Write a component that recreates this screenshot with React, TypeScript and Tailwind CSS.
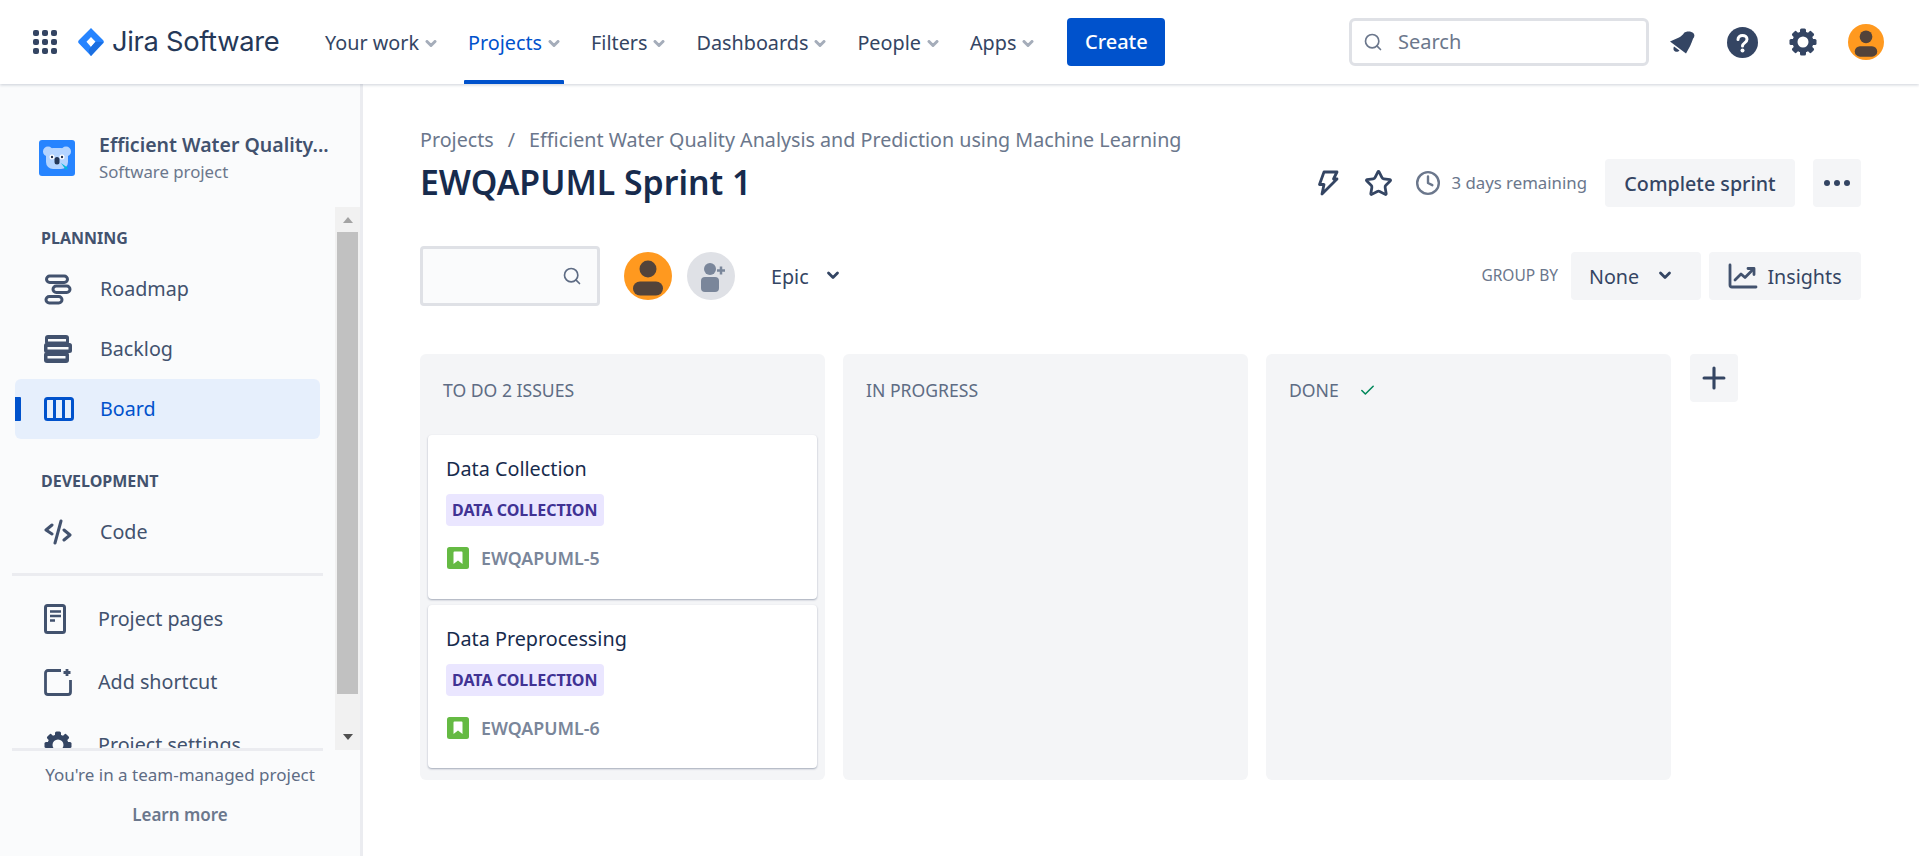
import React from 'react';
import { Plus, Check, Search, Star, Clock } from 'lucide-react';

const NavChevron: React.FC = () => (
  <svg width="12" height="8" viewBox="0 0 12 8" className="ml-[6px] mt-[1px]">
    <path d="M2 1.500l4 4 4-4" fill="none" stroke="#A5ADBA" strokeWidth="3" strokeLinecap="round" strokeLinejoin="round" />
  </svg>
);

const SmallChevron: React.FC = () => (
  <svg width="14" height="10" viewBox="0 0 14 10">
    <path d="M2.500 2l4.500 4.500L11.500 2" fill="none" stroke="#344563" strokeWidth="2.800" strokeLinecap="round" strokeLinejoin="round" />
  </svg>
);

const GridIcon: React.FC = () => (
  <svg width="24" height="24" viewBox="0 0 24 24" fill="#344563">
    {[0, 9, 18].map((y) =>
      [0, 9, 18].map((x) => <rect key={`${x}-${y}`} x={x} y={y} width="6" height="6" rx="2" />)
    )}
  </svg>
);

const JiraLogo: React.FC = () => (
  <svg width="26" height="28" viewBox="0 0 26 28">
    <path d="M13 0L25 12a2.500 2.500 0 010 3.500L13 28 1 15.500a2.500 2.500 0 010-3.500z" fill="#2684FF" />
    <path d="M13 9l4.500 4.800L13 19l-4.500-5.200z" fill="#fff" />
    <path d="M13 19l4.500-5.200L25.500 14 13 28c-3-4-3-6 0-9z" fill="#1C6FE0" />
  </svg>
);

const UserAvatar: React.FC<{ size: number }> = ({ size }) => (
  <svg width={size} height={size} viewBox="0 0 48 48">
    <circle cx="24" cy="24" r="24" fill="#FF991F" />
    <circle cx="24" cy="17" r="8.500" fill="#53433A" />
    <rect x="9" y="29.500" width="30" height="14" rx="7" fill="#53433A" />
  </svg>
);

const BellIcon: React.FC = () => (
  <svg width="25" height="23" viewBox="0 0 25 23" fill="#344563">
    <path d="M0 10.500L9 6.500C11.500 5.300 13 3.500 14 2 16 -.2 21.500 0 23.500 2.200 25 4 24.500 6 23 7.800 22.300 10 21 13 20 15.200L16 22.500z" />
    <path d="M4 15.500l5.500 4c-1.500 2-4.500 1.500-5.500 0-.7-1-.7-2.500 0-4z" />
  </svg>
);

const HelpIcon: React.FC = () => (
  <svg width="31" height="31" viewBox="0 0 31 31">
    <circle cx="15.500" cy="15.500" r="15.500" fill="#344563" />
    <path d="M11 12.500c0-2.500 2-4 4.500-4s4.500 1.500 4.500 3.800c0 3.700-4.500 3.400-4.500 6.700" fill="none" stroke="#fff" strokeWidth="3" strokeLinecap="round" />
    <circle cx="15.500" cy="23.500" r="2" fill="#fff" />
  </svg>
);

const GearIcon: React.FC<{ size?: number; color?: string }> = ({ size = 28, color = '#344563' }) => (
  <svg width={size} height={size} viewBox="0 0 28 28">
    {[0, 45, 90, 135, 180, 225, 270, 315].map((a) => (
      <rect key={a} x="11" y="0.500" width="6" height="6" rx="1.500" fill={color} transform={`rotate(${a} 14 14)`} />
    ))}
    <circle cx="14" cy="14" r="8" fill="none" stroke={color} strokeWidth="5" />
  </svg>
);

const KoalaIcon: React.FC = () => (
  <svg width="36" height="36" viewBox="0 0 36 36">
    <rect width="36" height="36" rx="3" fill="#2684FF" />
    <circle cx="9" cy="11.500" r="5" fill="#B3D4FF" />
    <circle cx="27" cy="11.500" r="5" fill="#B3D4FF" />
    <rect x="7" y="8" width="22" height="21" rx="7" fill="#B3D4FF" />
    <circle cx="13" cy="17" r="2.500" fill="#fff" />
    <circle cx="23" cy="17" r="2.500" fill="#fff" />
    <circle cx="13" cy="17" r="1.200" fill="#253858" />
    <circle cx="23" cy="17" r="1.200" fill="#253858" />
    <rect x="15.500" y="17" width="5" height="7.500" rx="2.500" fill="#253858" />
    <path d="M22 23l7 5-2 2z" fill="#00B8D9" />
  </svg>
);

const RoadmapIcon: React.FC = () => (
  <svg width="28" height="31" viewBox="0 0 28 31" fill="none" stroke="#42526E" strokeWidth="3">
    <rect x="2.500" y="2" width="21" height="6.500" rx="3.250" />
    <rect x="9" y="12" width="17" height="6.500" rx="3.250" />
    <rect x="2" y="22.500" width="16" height="6.500" rx="3.250" />
  </svg>
);

const BacklogIcon: React.FC = () => (
  <svg width="28" height="28" viewBox="0 0 28 28">
    <g fill="#42526E">
      <rect x="1" y="0" width="24" height="10" rx="3" />
      <rect x="0" y="8" width="28" height="10" rx="2.500" />
      <rect x="0" y="17" width="25" height="11" rx="3" />
    </g>
    <g fill="#FAFBFC">
      <rect x="4" y="4" width="18" height="2.500" />
      <rect x="3.500" y="12" width="21" height="2.500" />
      <rect x="3.500" y="21" width="18" height="2.500" />
    </g>
  </svg>
);

const BoardIcon: React.FC = () => (
  <svg width="30" height="24" viewBox="0 0 30 24" fill="none" stroke="#0052CC" strokeWidth="3">
    <rect x="1.500" y="1.500" width="27" height="21" rx="2" />
    <path d="M10.500 2v20M19.500 2v20" />
  </svg>
);

const CodeIcon: React.FC = () => (
  <svg width="28" height="26" viewBox="0 0 28 26" fill="none" stroke="#42526E" strokeWidth="3" strokeLinecap="round" strokeLinejoin="round">
    <path d="M8 6l-6 5 6 4M20 11l6 5-6 5M17 2l-6 22" />
  </svg>
);

const PagesIcon: React.FC = () => (
  <svg width="22" height="30" viewBox="0 0 22 30" fill="none" stroke="#42526E">
    <rect x="1.500" y="1.500" width="19" height="27" rx="2" strokeWidth="3" />
    <path d="M6 7.500h11M6 12h11M6 16.500h5" strokeWidth="2.500" />
  </svg>
);

const ShortcutIcon: React.FC = () => (
  <svg width="28" height="28" viewBox="0 0 28 28" fill="none" stroke="#42526E">
    <path d="M17 2.500H4A2.500 2.500 0 001.500 5v19A2.500 2.500 0 004 26.500h20a2.500 2.500 0 002.500-2.500V12" strokeWidth="2.800" />
    <path d="M23 1v7M19.500 4.500h7" strokeWidth="2.800" />
  </svg>
);

const BoltIcon: React.FC = () => (
  <svg width="22" height="26" viewBox="0 0 22 26" fill="none" stroke="#344563" strokeWidth="2.800" strokeLinejoin="round" strokeLinecap="round">
    <path d="M7 2h13l-3.500 7H20L5 24l2-9.500H2.500z" />
  </svg>
);

const InsightsIcon: React.FC = () => (
  <svg width="30" height="26" viewBox="0 0 30 26" fill="none" stroke="#42526E" strokeWidth="2.800" strokeLinecap="round" strokeLinejoin="round">
    <path d="M2 2v20a2 2 0 002 2h24" />
    <path d="M7 17l6-6 4 3.500 8-8" />
    <path d="M20 5.500h6v6" />
  </svg>
);

const AddPersonAvatar: React.FC = () => (
  <svg width="48" height="48" viewBox="0 0 48 48">
    <circle cx="24" cy="24" r="24" fill="#DFE1E6" />
    <circle cx="23" cy="17" r="6" fill="#7A869A" />
    <rect x="14" y="25" width="18" height="15" rx="4" fill="#7A869A" />
    <path d="M30 18.500h8M34 14.500v8" stroke="#7A869A" strokeWidth="2.500" />
  </svg>
);

const StoryIcon: React.FC = () => (
  <svg width="22" height="22" viewBox="0 0 22 22" className="shrink-0">
    <rect width="22" height="22" rx="2.500" fill="#65BA43" />
    <path d="M6.500 5.500a1 1 0 011-1h7a1 1 0 011 1V17l-4.500-3.500L6.500 17z" fill="#fff" />
  </svg>
);

const NavItem: React.FC<{ label: string; active?: boolean }> = ({ label, active }) => (
  <div
    className={`relative flex items-center h-full text-[19.8px] ${
      active ? 'text-[#0052CC]' : 'text-[#344563]'
    }`}
  >
    {label}
    <NavChevron />
    {active && <div className="absolute left-[-4px] right-[-4px] bottom-0 h-[4px] bg-[#0052CC] rounded-t-[1px]" />}
  </div>
);

const SideItem: React.FC<{ icon: React.ReactNode; label: string; tight?: boolean; active?: boolean }> = ({
  icon,
  label,
  tight,
  active,
}) => (
  <div
    className={`relative flex items-center h-[60px] text-[19.7px] rounded-[6px] ${
      active ? 'bg-[#E6EFFC] text-[#0052CC]' : 'text-[#42526E]'
    }`}
  >
    {active && <div className="absolute left-0 top-[18px] h-[24px] w-[6px] bg-[#0052CC] rounded-r-[1px]" />}
    <div className={`${tight ? 'w-[83px]' : 'w-[85px]'} pl-[29px] flex items-center shrink-0`}>{icon}</div>
    {label}
  </div>
);

const Issue: React.FC<{ title: string; id: string; h: string }> = ({ title, id, h }) => (
  <div className={`${h} mx-[8px] px-[18px] pt-[20px] bg-white rounded-[4px] shadow-[0_1px_2px_rgba(9,30,66,0.35)]`}>
    <div className="text-[19.8px] leading-[28px] text-[#172B4D]">{title}</div>
    <div className="mt-[11px] inline-flex items-center h-[32px] px-[6px] rounded-[4px] bg-[#EAE6FF] text-[16px] font-bold text-[#403294]">
      DATA COLLECTION
    </div>
    <div className="mt-[19px] flex items-center gap-[12px] pl-[1px] text-[17.8px] font-semibold text-[#7A869A]">
      <StoryIcon />
      {id}
    </div>
  </div>
);

const Column: React.FC<{ title: string; children?: React.ReactNode; check?: boolean }> = ({ title, children, check }) => (
  <div className="w-[405px] h-[426px] bg-[#F4F5F7] rounded-[6px]">
    <div className="h-[81px] pl-[23px] pb-[8px] flex items-center gap-[20px] text-[17.6px] text-[#5E6C84]">
      {title}
      {check && <Check size={17} strokeWidth={2.2} color="#00875A" />}
    </div>
    <div className="flex flex-col gap-[6px]">{children}</div>
  </div>
);

const GrayButton: React.FC<{ className: string; children: React.ReactNode }> = ({ className, children }) => (
  <div className={`h-[48px] flex items-center bg-[#F4F5F7] rounded-[4px] text-[19.7px] text-[#344563] ${className}`}>
    {children}
  </div>
);

export default function App() {
  return (
    <div className="w-[1919px] h-[856px] overflow-hidden bg-white font-['Noto_Sans',sans-serif] flex flex-col">
      {/* top bar */}
      <header className="relative z-10 h-[84px] shrink-0 flex items-center pl-[33px] bg-white shadow-[0_1px_3px_rgba(9,30,66,0.2)]">
        <GridIcon />
        <div className="ml-[21px]">
          <JiraLogo />
        </div>
        <div className="ml-[8px] w-[213px] text-[27.3px] font-['Inter',sans-serif] text-[#253858] -tracking-[0.3px]">Jira Software</div>
        <nav className="h-full flex items-center gap-[31px] pt-[2px]">
          <NavItem label="Your work" />
          <NavItem label="Projects" active />
          <NavItem label="Filters" />
          <NavItem label="Dashboards" />
          <NavItem label="People" />
          <NavItem label="Apps" />
        </nav>
        <div className="ml-[33px] w-[98px] h-[48px] flex items-center justify-center rounded-[4px] bg-[#0052CC] text-white text-[20px] font-medium">
          Create
        </div>
        <div className="ml-auto w-[300px] h-[48px] flex items-center gap-[15px] pl-[11px] border-[3px] border-[#DFE1E6] rounded-[6px] text-[20px] text-[#6B778C]">
          <Search size={20} strokeWidth={2} color="#6B778C" />
          Search
        </div>
        <div className="ml-[21px] w-[25px]">
          <BellIcon />
        </div>
        <div className="ml-[32px]">
          <HelpIcon />
        </div>
        <div className="ml-[31px]">
          <GearIcon />
        </div>
        <div className="ml-[31px] mr-[35px]">
          <UserAvatar size={36} />
        </div>
      </header>

      <div className="flex-1 flex min-h-0">
        {/* sidebar */}
        <aside className="w-[363px] shrink-0 flex flex-col bg-[#FAFBFC] border-r-[3px] border-[#EBECF0]">
          <div className="h-[123px] shrink-0 flex items-start pl-[39px] pt-[56px]">
            <KoalaIcon />
            <div className="ml-[24px] -mt-[8px]">
              <div className="text-[19.5px] leading-[26px] font-semibold text-[#42526E]">Efficient Water Quality...</div>
              <div className="text-[16.8px] leading-[24px] text-[#6B778C] mt-[2px]">Software project</div>
            </div>
          </div>
          <div className="h-[543px] shrink-0 flex">
            <div className="w-[335px] shrink-0 overflow-hidden">
              <div className="pl-[41px] mt-[21px] text-[16px] leading-[20px] font-bold text-[#42526E]">PLANNING</div>
              <div className="ml-[15px] w-[305px] mt-[11px]">
                <SideItem icon={<RoadmapIcon />} label="Roadmap" />
                <SideItem icon={<BacklogIcon />} label="Backlog" />
                <SideItem icon={<BoardIcon />} label="Board" active />
              </div>
              <div className="pl-[41px] mt-[32px] text-[16px] leading-[20px] font-bold text-[#42526E]">DEVELOPMENT</div>
              <div className="ml-[15px] w-[305px] mt-[11px]">
                <SideItem icon={<CodeIcon />} label="Code" />
              </div>
              <div className="ml-[12px] w-[311px] h-[3px] mt-[11px] bg-[#EBECF0]" />
              <div className="ml-[15px] w-[305px] mt-[13px]">
                <div className="flex flex-col gap-[3px]">
                  <SideItem icon={<PagesIcon />} label="Project pages" tight />
                  <SideItem icon={<ShortcutIcon />} label="Add shortcut" tight />
                  <SideItem icon={<GearIcon />} label="Project settings" tight />
                </div>
              </div>
            </div>
            <div className="w-[25px] bg-[#F1F1F1] flex flex-col items-center">
              <div className="h-[25px] shrink-0 flex items-center justify-center">
                <div className="border-x-[5px] border-x-transparent border-b-[6px] border-b-[#A3A3A3]" />
              </div>
              <div className="w-[21px] h-[462px] bg-[#C1C1C1]" />
              <div className="flex-1 flex items-end justify-center pb-[10px]">
                <div className="border-x-[5px] border-x-transparent border-t-[6px] border-t-[#505050]" />
              </div>
            </div>
          </div>
          <div className="mx-[12px] w-[311px] -mt-[2px] h-[3px] shrink-0 bg-[#EBECF0] relative" />
          <div className="text-center text-[17px] text-[#5E6C84] w-[360px]">
            <div className="mt-[12px] leading-[24px]">You're in a team-managed project</div>
            <div className="mt-[16px] leading-[24px] font-semibold text-[#6B778C]">Learn more</div>
          </div>
        </aside>

        {/* board */}
        <main className="flex-1 pl-[57px] pr-[58px]">
          <div className="mt-[44px] h-[24px] flex items-center text-[19.7px] text-[#6B778C]">
            Projects<span className="mx-[14px]">/</span>Efficient Water Quality Analysis and Prediction using Machine Learning
          </div>
          <div className="mt-[7px] h-[48px] flex items-center justify-between">
            <h1 className="h-[48px] text-[33.8px] leading-[46px] font-semibold text-[#172B4D]">EWQAPUML Sprint 1</h1>
            <div className="flex items-center">
              <BoltIcon />
              <div className="ml-[25px]">
                <Star size={29} strokeWidth={2.3} color="#344563" />
              </div>
              <div className="ml-[22px]">
                <Clock size={26} strokeWidth={2.2} color="#6B778C" />
              </div>
              <div className="ml-[10px] text-[16.8px] text-[#6B778C]">3 days remaining</div>
              <GrayButton className="ml-[18px] w-[190px] justify-center pt-[2px] font-medium">Complete sprint</GrayButton>
              <GrayButton className="ml-[18px] w-[48px] justify-center gap-[4px]">
                <i className="w-[6px] h-[6px] rounded-full bg-[#344563]" />
                <i className="w-[6px] h-[6px] rounded-full bg-[#344563]" />
                <i className="w-[6px] h-[6px] rounded-full bg-[#344563]" />
              </GrayButton>
            </div>
          </div>

          <div className="mt-[39px] h-[60px] flex items-center">
            <div className="w-[180px] h-[60px] flex items-center justify-end pr-[15px] bg-[#FAFBFC] border-[3px] border-[#DFE1E6] rounded-[4px]">
              <Search size={20} strokeWidth={2} color="#5E6C84" />
            </div>
            <div className="ml-[24px]">
              <UserAvatar size={48} />
            </div>
            <div className="ml-[15px]">
              <AddPersonAvatar />
            </div>
            <div className="ml-[36px] pt-[2px] text-[19.7px] text-[#344563]">Epic</div>
            <div className="ml-[17px]">
              <SmallChevron />
            </div>
            <div className="ml-auto flex items-center gap-[8px]">
              <div className="text-[15.5px] mr-[5px] text-[#6B778C]">GROUP BY</div>
              <GrayButton className="w-[130px] pl-[18px] gap-[19px]">
                <span className="pt-[2px]">None</span>
                <SmallChevron />
              </GrayButton>
              <GrayButton className="w-[152px] justify-center gap-[9px]">
                <InsightsIcon />
                <span className="pt-[2px]">Insights</span>
              </GrayButton>
            </div>
          </div>

          <div className="mt-[48px] flex items-start gap-[18px]">
            <Column title="TO DO 2 ISSUES">
              <Issue title="Data Collection" id="EWQAPUML-5" h="h-[164px]" />
              <Issue title="Data Preprocessing" id="EWQAPUML-6" h="h-[163px]" />
            </Column>
            <Column title="IN PROGRESS" />
            <Column title="DONE" check />
            <GrayButton className="w-[48px] ml-[1px] justify-center">
              <Plus size={34} strokeWidth={2.2} color="#344563" />
            </GrayButton>
          </div>
        </main>
      </div>
    </div>
  );
}
